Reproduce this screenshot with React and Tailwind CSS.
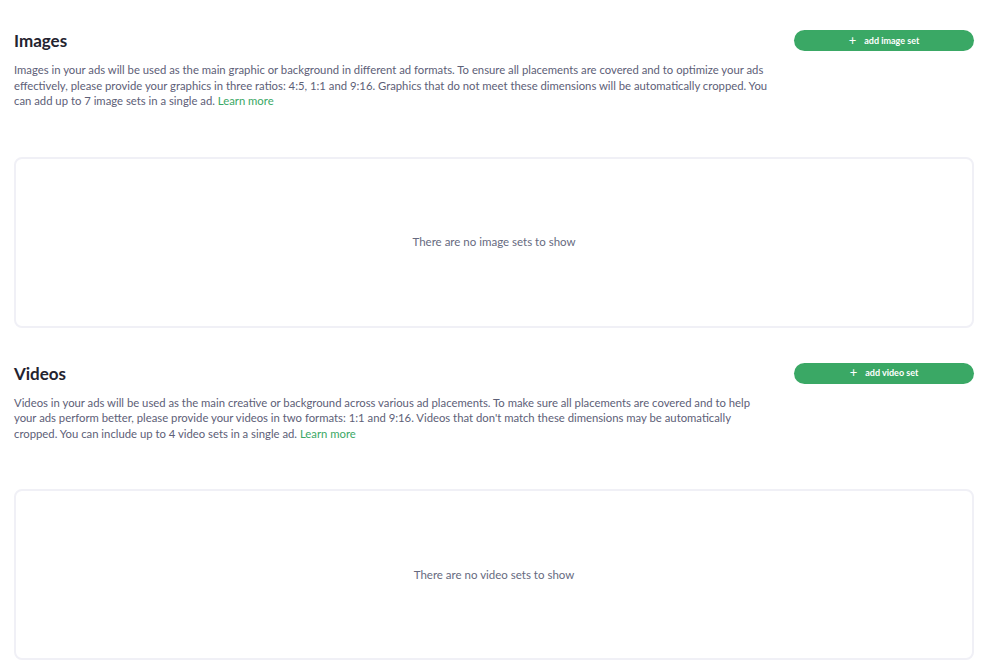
import React from "react";

function Section({ title, lines, button, empty }) {
  return (
    <section className="flex flex-col">
      <div className="flex items-start justify-between gap-[10px]">
        <div className="flex-1">
          <h2 className="text-[17px] font-bold leading-[22px] text-[#24232f]">{title}</h2>
          <p className="mt-[10px] text-[11.3px] leading-[15.5px] text-[#5d6077]">
            {lines.map((l, i) => (
              <span key={i} className="block whitespace-nowrap">
                {l}
                {i === lines.length - 1 && (
                  <>
                    {" "}
                    <a className="text-[#3aa865]">Learn more</a>
                  </>
                )}
              </span>
            ))}
          </p>
        </div>
        <button className="w-[180px] h-[21px] rounded-full bg-[#3aa865] text-white text-[9px] font-bold flex items-center justify-center gap-[8px]">
          <span className="text-[13px] font-normal leading-none -mt-[1px]">+</span>
          {button}
        </button>
      </div>
      <div className="mt-[48px] h-[171px] rounded-[8px] border-2 border-[#f0f0f6] flex items-center justify-center text-[11.5px] text-[#666a80]">
        {empty}
      </div>
    </section>
  );
}

export default function App() {
  return (
    <div className="bg-white min-h-[668px] pl-[14px] pr-[10px] pt-[30px] flex flex-col gap-[35px]" style={{ fontFamily: "Lato, 'Noto Sans', sans-serif" }}>
      <Section
        title="Images"
        lines={[
          "Images in your ads will be used as the main graphic or background in different ad formats. To ensure all placements are covered and to optimize your ads",
          "effectively, please provide your graphics in three ratios: 4:5, 1:1 and 9:16. Graphics that do not meet these dimensions will be automatically cropped. You",
          "can add up to 7 image sets in a single ad.",
        ]}
        button="add image set"
        empty="There are no image sets to show"
      />
      <Section
        title="Videos"
        lines={[
          "Videos in your ads will be used as the main creative or background across various ad placements. To make sure all placements are covered and to help",
          "your ads perform better, please provide your videos in two formats: 1:1 and 9:16. Videos that don't match these dimensions may be automatically",
          "cropped. You can include up to 4 video sets in a single ad.",
        ]}
        button="add video set"
        empty="There are no video sets to show"
      />
    </div>
  );
}
